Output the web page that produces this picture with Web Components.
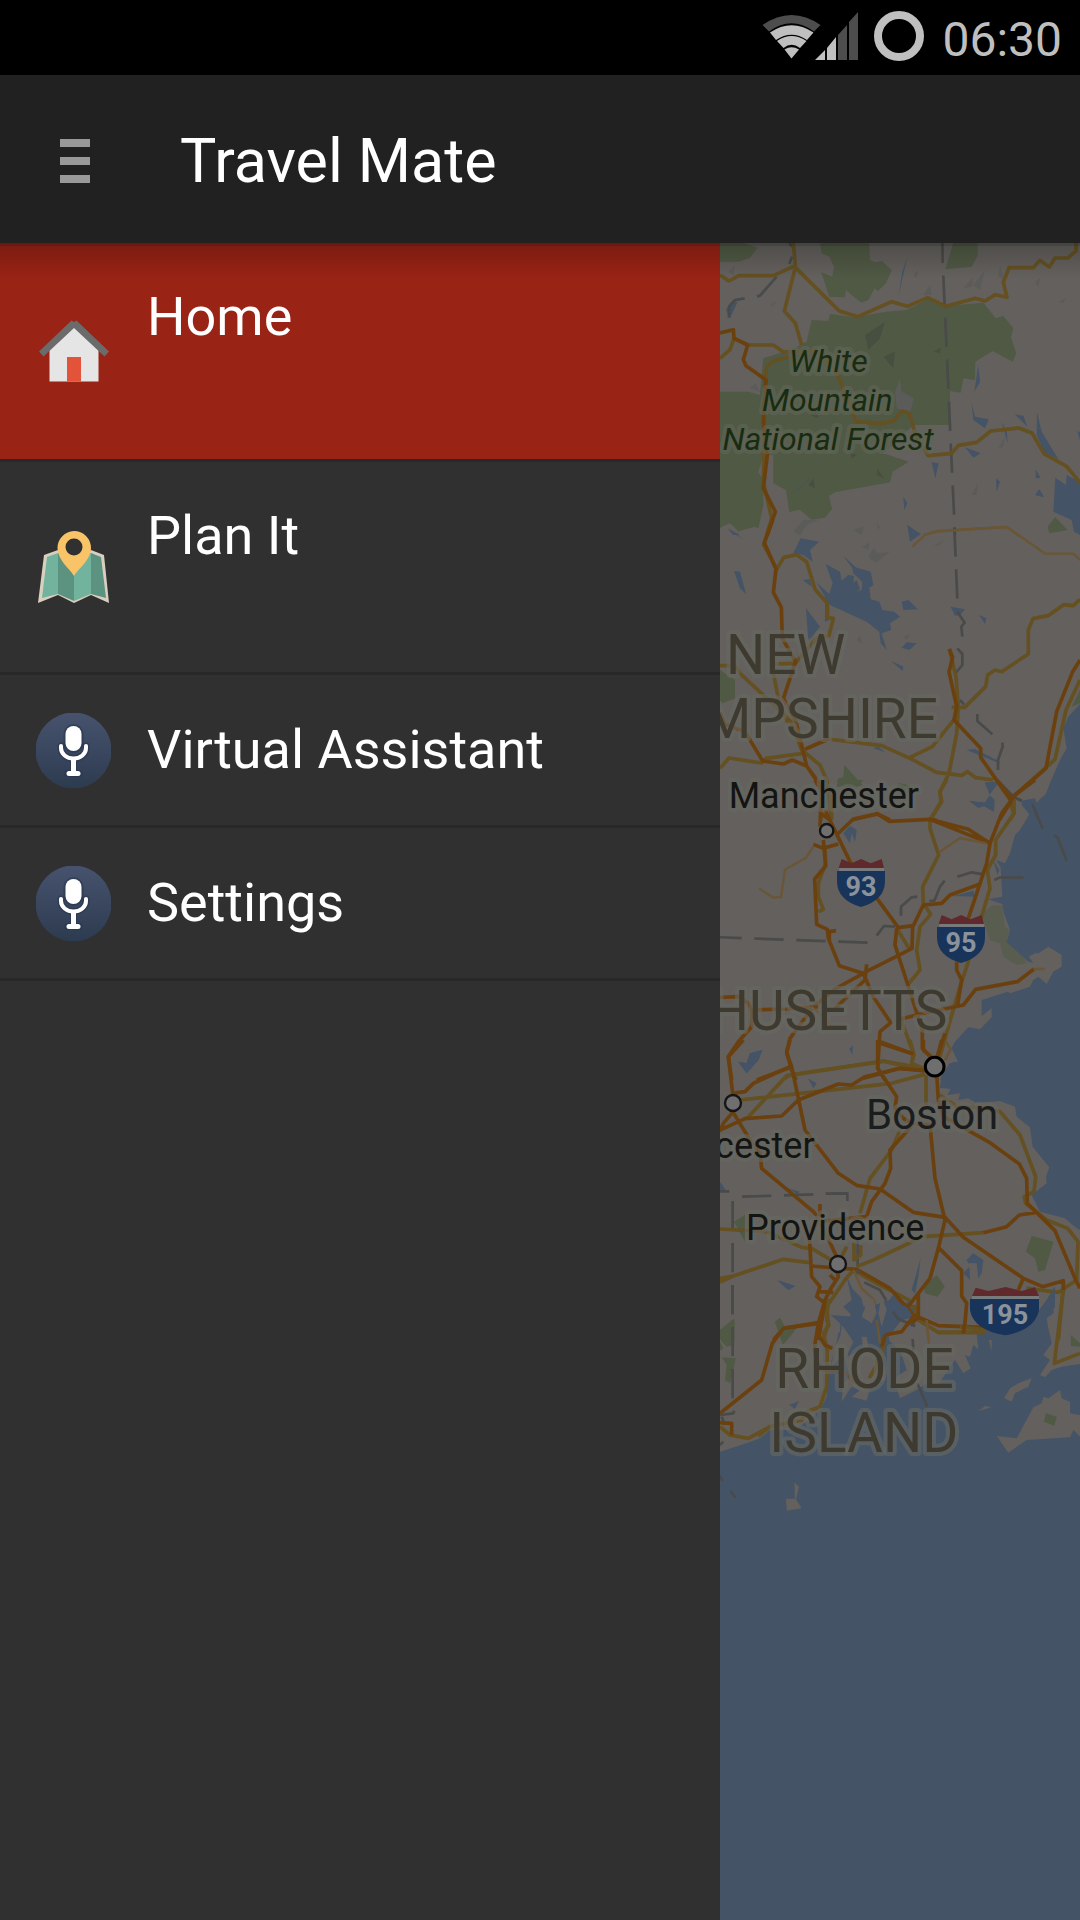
<!DOCTYPE html>
<html lang="en">
<head>
<meta charset="utf-8">
<meta name="viewport" content="width=device-width, initial-scale=1">
<title>Travel Mate</title>
<style>
    body {
        margin: 0;
        background: #303030;
        font-family: Roboto, "Noto Sans", sans-serif;
    }
    svg { display: block; }
</style>
</head>
<body>
<travel-app>
    <status-bar slot="status" time="06:30"></status-bar>
    <app-bar slot="bar">Travel Mate</app-bar>
    <nav-drawer slot="drawer">
        <drawer-item active tall href="#home">
            <svg slot="icon" width="75" height="75" viewBox="0 0 75 75">
                <path d="M13.500 33 38 10 62.500 33V67.500H13.500z" fill="#e5e5e5"/>
                <path d="M31 43h14v24.500H31z" fill="#e2533a"/>
                <path d="M3 37.500 35.500 6.500 38 8 40.500 6.500 73 37.500 68.500 42.500 38 14 7.500 42.500z" fill="#6b6b6b"/>
            </svg>
            Home
        </drawer-item>
        <drawer-item tall href="#plan">
            <svg slot="icon" width="75" height="75" viewBox="0 2 75 75">
                <path d="M8 27 22 22 38 29 55 22 68 27 73 75 55 67 38 75 22 67 2 75z" fill="#d8cfbf"/>
                <path d="M11 29 22 25V66L6 70z" fill="#72b39d"/>
                <path d="M22 25 38 31V73L22 66z" fill="#5c9280"/>
                <path d="M38 31 55 25V66L38 73z" fill="#72b39d"/>
                <path d="M55 25 65 29 70 70 55 66z" fill="#5c9280"/>
                <path d="M38 3A17 17 0 0 0 21.500 20C21.500 32 34 41 38 48C42 41 55 32 55 20A17 17 0 0 0 38 3z" fill="#f9c367"/>
                <circle cx="38" cy="19" r="8.500" fill="#303030"/>
            </svg>
            Plan It
        </drawer-item>
        <drawer-item href="#assistant"><mic-icon slot="icon"></mic-icon>Virtual Assistant</drawer-item>
        <drawer-item href="#settings"><mic-icon slot="icon"></mic-icon>Settings</drawer-item>
    </nav-drawer>
    <map-view></map-view>
</travel-app>

<script>
function define(name, html, init) {
    const template = document.createElement('template')
    template.innerHTML = html
    customElements.define(name, class extends HTMLElement {
        constructor() {
            super()
            this.attachShadow({mode: 'open'})
            this.shadowRoot.append(template.content.cloneNode(true))
        }
        connectedCallback() {
            if (init) init(this, this.shadowRoot)
        }
    })
}

define('travel-app', `
<style>
    :host {
        display: flex;
        flex-direction: column;
        min-height: 100vh;
    }
    main {
        flex: 1;
        display: grid;
        grid-template-columns: 2fr 1fr;
    }
</style>
<slot name="status"></slot>
<slot name="bar"></slot>
<main>
    <slot name="drawer"></slot>
    <slot></slot>
</main>
`)

define('status-bar', `
<style>
    :host {
        display: flex;
        justify-content: flex-end;
        align-items: center;
        height: 75px;
        padding-right: 18px;
        background: #000;
        color: #bfbfbf;
    }
    svg { display: block; }
    time {
        margin-left: 18px;
        font-size: 48px;
        line-height: 56px;
        padding-top: 4px;
    }
</style>
<svg width="164" height="75" viewBox="760 0 164 75" fill="#bfbfbf">
    <path fill="#4d4d4d" d="M762.500 25Q791.500 5 820.500 25L814 31.500Q791.500 15 769 31.500z"/>
    <path d="M770 32.500Q791.500 18 813.500 32.500L807 40Q791.500 29.500 776 40z"/>
    <path d="M777 41Q791.500 31 806.500 41L800 48Q791.500 41.500 783.500 48z"/>
    <path d="M784.500 49.500Q791.500 45 799 49.500L791.500 58.500z"/>
    <path d="M815 60 825 50V60zM827 48 836 37V60H827z"/>
    <path fill="#4d4d4d" d="M838 35 847 25V60H838zM849 22 858 12V60H849z"/>
    <circle cx="899" cy="36" r="21" fill="none" stroke="#bfbfbf" stroke-width="8"/>
</svg>
<time></time>
`, (host, root) => {
    root.querySelector('time').textContent = host.getAttribute('time')
})

define('app-bar', `
<style>
    :host {
        position: relative;
        z-index: 1;
        display: flex;
        align-items: center;
        gap: 90px;
        height: 168px;
        padding: 4px 0 0 60px;
        box-sizing: border-box;
        background: #212121;
        color: #fff;
    }
    /* shadow that falls on the content below */
    :host::after {
        content: "";
        position: absolute;
        top: 100%;
        left: 0;
        right: 0;
        height: 36px;
        border-top: 3px solid rgba(0, 0, 0, .12);
        background: linear-gradient(rgba(0, 0, 0, .2), transparent) border-box;
        box-sizing: border-box;
        pointer-events: none;
    }
    button {
        display: grid;
        gap: 10px;
        padding: 0;
        border: 0;
        background: none;
    }
    i {
        width: 30px;
        height: 8px;
        background: #999;
    }
    h1 {
        margin: 0;
        font-size: 61px;
        font-weight: 400;
        line-height: 72px;
    }
</style>
<button aria-label="Menu"><i></i><i></i><i></i></button>
<h1><slot></slot></h1>
`)

define('nav-drawer', `
<style>
    :host {
        display: block;
        background: #303030;
    }
</style>
<nav><slot></slot></nav>
`)

define('drawer-item', `
<style>
    :host {
        display: block;
        border-bottom: 3px solid #282828;
        --row: 150px;
    }
    :host([tall]) { --row: 210px; }
    :host([active]) {
        --row: 216px;
        background: #992315;
    }
    a {
        display: flex;
        align-items: center;
        gap: 36px;
        min-height: var(--row);
        padding: 0 36px;
        color: #fff;
        font-size: 54px;
        line-height: 64px;
        text-decoration: none;
    }
    :host([tall]) .label {
        align-self: flex-start;
        padding-top: 42px;
    }
</style>
<a><slot name="icon"></slot><span class="label"><slot></slot></span></a>
`, (host, root) => {
    root.querySelector('a').href = host.getAttribute('href')
})

define('mic-icon', `
<style>
    :host { display: block; }
    svg { display: block; }
</style>
<svg width="75" height="75" viewBox="0 0 75 75">
    <defs>
        <linearGradient id="disc" x2="0" y2="1">
            <stop stop-color="#47536e"/>
            <stop offset="1" stop-color="#2d3b50"/>
        </linearGradient>
    </defs>
    <circle cx="37.500" cy="37.500" r="38" fill="url(#disc)"/>
    <g stroke="#26324b" stroke-opacity=".5" fill="none">
        <path d="M37.500 21v9" stroke-width="20" stroke-linecap="round"/>
        <path d="M25 33v2a12.500 10.500 0 0 0 25 0v-2M37.500 46v13M32 60.500h11" stroke-width="7" stroke-linecap="round"/>
    </g>
    <g stroke="#fff" fill="none">
        <path d="M37.500 21v9" stroke-width="16" stroke-linecap="round"/>
        <path d="M25 33v2a12.500 10.500 0 0 0 25 0v-2" stroke-width="4" stroke-linecap="round"/>
        <path d="M37.500 46v13" stroke-width="5"/>
        <path d="M33 60.500h9" stroke-width="5" stroke-linecap="round"/>
    </g>
</svg>
`)

define('map-view', `
<style>
    :host {
        display: block;
        overflow: hidden;
        background: #445366;
    }
    svg {
        display: block;
        width: 100%;
    }
    .land { fill: #63605d; }
    .water { fill: #445366; }
    .park { fill: #505944; }
    .hill { fill: #475040; }
    .rock { fill: #5b5b5a; }
    .y, .o, .p, .border { fill: none; stroke-linejoin: round; }
    .y { stroke: #645021; stroke-width: 11; }
    .o { stroke: #6b400f; stroke-width: 11; }
    .p { stroke: #6a5635; stroke-width: 7; }
    .border { stroke: #494a4a; stroke-width: 8; }
    .dash { stroke-dasharray: 88 38; }
    text {
        font-family: Roboto, "Noto Sans", sans-serif;
        text-anchor: middle;
        paint-order: stroke;
        stroke: #676963;
        stroke-opacity: .6;
        stroke-width: 24px;
        stroke-linejoin: round;
    }
    .forest { font-size: 96px; font-style: italic; fill: #182c12; stroke: #616658; }
    .state { font-size: 165px; fill: #3f3a2f; text-anchor: start; }
    .city { font-size: 108px; fill: #141412; text-anchor: start; }
    .capital { font-size: 126px; fill: #1b1c1d; text-anchor: start; }
    .shield { font-size: 81px; font-weight: 700; fill: #8a939c; stroke: none; }
    .dot { fill: #6f6f6f; stroke: #151515; stroke-width: 7; }
</style>
<svg viewBox="0 0 1080 5031" preserveAspectRatio="xMinYMin slice">
    <path class="land" d="M0 0H1080V4000H0z"/>

    <!-- White Mountains -->
    <g transform="translate(-30 -24)">
        <path class="park" d="M30 24H100L143 38 120 68 87 80 30 80zM330 24H477L480 75 497 82 515 78 545 105 528 145 504 168 494 160 475 195 454 203 408 166 405 187 358 185 334 112 367 125 372 95 358 65 335 55zM730 24H803V62L785 95 706 103z"/>
        <path class="park" d="M360 236 430 247 530 230 590 225 660 190 720 212 820 203 857 250 880 243 910 280 903 307 919 355 908 380 848 348 796 380 795 435 760 430 752 473 720 468V570L610 570 520 655 596 680 548 710 540 742 375 772 357 782 366 822 345 848 305 854 270 824 238 831 228 765 190 745V660L160 660 145 712 160 735V812L145 880 115 867 85 890 60 855 30 880V470H115L150 480 160 370 240 345 290 320 305 255 355 258z"/>
        <path class="hill" d="M465 300 525 260 510 310 475 345zM520 365 555 350 550 400zM670 350 693 338 690 355zM300 540 320 525 325 550zM455 600 480 590 470 620zM500 700 523 730 503 722zM295 750 310 730 315 760zM420 650 440 660 425 670z"/>
        <path class="rock" d="M555 470 570 430 575 470 612 490 600 535 560 520zM610 120 625 105 620 130zM640 180 660 150 665 180zM760 160 790 125 785 155zM790 150 825 105 810 165zM870 95 885 135 865 125zM975 140 990 130 985 155zM1045 203 1070 187 1060 203zM180 213 200 195 190 213zM55 110 75 92 70 120zM785 780 803 745 800 780zM120 460 135 445 150 470zM865 640 885 605 880 635zM250 890 280 855 325 855 290 870 270 900z"/>
        <path class="water" d="M592 65 565 185 577 110zM48 225 65 200 83 200 60 250zM805 390 810 440 793 470zM785 505 795 545 836 553 825 580 790 555zM765 637 812 655 790 668zM915 538 940 542 952 575zM875 560 890 590 893 625zM981 532 995 590 1045 672 1005 655 980 600zM665 682 686 685 676 730zM858 730 870 740 860 770zM977 704 992 728 977 730zM975 780 988 762 1002 787zM580 785 592 805 583 825zM1036 728 1068 750 1070 720 1085 728 1110 740V900L1092 890 1085 855 1030 830zM1102 587 1110 592V615zM592 870 632 900H600zM55 882 90 900H70zM240 783 300 728 300 733z"/>
        <path class="park" d="M1035 846 1073 885 1018 895 1013 875z"/>
        <path class="border" d="M238 24 246 35M246 65 238 87M200 125 150 182 141 184M104 190 75 195 57 215V248"/>
        <path class="border dash" d="M697 0 698 85 700 125 708 300 722 620 735 900" stroke-dashoffset="4"/>
        <path class="y" d="M250 24 256 92 190 122H87L57 138 30 120M256 97 388 228 444 245 545 200 592 214 653 188 708 214 796 190 825 198 856 179 891 187 880 142 897 98H970L989 76 1018 96 1035 69H1073L1098 48V24M256 97 223 228 256 265 275 330M30 370 60 344 72 310 115 330H190L220 351 320 348 380 410 438 560 510 566 550 558 577 528 598 535 620 610 655 662 725 655 745 631 800 622 842 588 926 579 966 594 1003 657 1070 694 1110 743M240 365 192 377 170 395 165 440 160 740 185 850 170 900"/>
        <path class="o" d="M30 294 70 284 72 310 113 330 100 374 108 392 168 435 160 560 172 660 160 760 196 830 172 900"/>
        <path class="p" d="M640 900 680 888 890 876 930 904"/>
    </g>

    <!-- New Hampshire lakes and seacoast -->
    <g transform="translate(-30 831)">
        <path class="park" d="M30 0H145V18L85 33 60 10 30 22zM30 450 75 480V535L37 550 30 540zM403 735 460 798 380 800 385 775 400 772zM565 790 600 795 595 818 560 805zM1110 510V550L1085 560z"/>
        <path class="rock" d="M430 30 460 20 455 45zM455 80 480 68 475 90zM475 110 490 85 505 100 540 95 520 110 500 128 485 120zM670 80 700 60 690 75zM580 350 600 345 590 360zM440 360 450 345 455 370zM500 10 510 20 505 30z"/>
        <path class="water" d="M592 15 632 42 600 65zM272 55 327 65 300 90 308 125 280 105 250 100zM55 25 100 58 62 35zM72 153 90 155 108 222 90 205zM278 180 300 178 305 200zM347 132 390 155 395 182 415 165 432 167 430 190 440 180 450 208 437 215 455 210 457 185 430 160 427 145 400 107 433 138 440 143 482 155 490 195 478 203 482 238 508 245 517 270 552 275 570 290 540 310 543 330 515 340 530 390 512 370 508 335 470 305 360 255 320 188 358 222 368 190zM345 230 357 240V300L345 305zM288 265 330 320 310 345 295 360zM575 245 595 240 623 268 580 270zM575 383 590 367 620 370 598 390zM543 423 580 440 578 453zM722 260 765 268 750 285 735 287zM807 285 829 295 825 312zM1085 0H1110V38zM505 680 525 697 490 685zM770 690 795 687 870 725 868 730zM825 788 865 785 855 802 837 825 853 840 852 875 822 858 805 863 778 843 825 848 840 825zM565 650 595 655 575 660z"/>
        <path class="water" d="M1110 552 1075 590 1060 625 1070 685 1050 720 1020 790 995 855 980 850 975 835 935 842 935 855 960 885 950 900H1110z"/>
        <path class="border dash" d="M733 22 742 237"/>
        <path class="border" d="M742 275 764 308 754 320 757 350M742 385 757 402V435L738 458M750 540 762 553M802 582V603L847 643M877 668 878 680 864 720V750M866 785 912 832 935 842M967 852 990 915"/>
        <path class="y" d="M185 0 161 75 200 147 222 112 260 104 290 125 315 208 352 250 353 293 370 295 357 347 320 355 255 430 195 432M30 437H75L90 460 240 600 275 690 330 735 350 780 365 900M190 460 210 560 235 610M30 745 57 714 155 729 168 715 280 700M290 685 355 657 515 677 600 715 680 757 755 766 773 755 797 773 850 780M600 712 667 680 735 595M718 387 738 470 745 560 740 640 717 760 690 815 693 845 660 900M725 562H764L827 500 833 465 855 450 875 455 955 402V330L969 296 1014 287 1061 254 1090 257 1110 238M1110 480 1068 570 1035 718 910 830 900 850 912 880 900 900"/>
        <path class="o" d="M188 0 163 68 198 147 190 217 214 262 217 355 257 425 220 535 258 605 290 738 332 800V900M30 578 45 613 105 635 158 723 220 732 247 720 290 738 335 800M285 688 355 657M332 880 360 900M425 900 502 882 540 900M660 900H680M718 387 728 412 717 455 740 560 732 600 812 685V712L900 838M1110 420 1088 455 1040 575 1008 745 915 825 868 900"/>
        <path class="p" d="M607 80 645 45 680 35 890 21 1006 101H1090L1110 120"/>
    </g>

    <!-- Merrimack valley and Boston harbour -->
    <g transform="translate(-30 1611)">
        <path class="park" d="M378 0H460L440 22 400 15z"/>
        <path class="park" d="M815 400 850 375 877 378 885 440 898 450 890 480 920 500 950 550 920 555 880 530 870 490 840 480z" opacity=".5"/>
        <path class="water" d="M1027 0 1010 40 975 72 950 60 960 100 930 150 915 165 900 220 885 250 858 240 872 262 877 350 835 358 877 372 882 400 900 450 890 487 905 500 955 545 970 548 956 530 975 520H985L1015 500 1055 525V560L1030 575 1010 612 985 590 970 600 960 620 900 640 893 635 815 660V708L845 685V712L810 748 775 742 735 785 725 805 745 845 720 850 700 880 690 900H1110V0z"/>
        <path class="water" d="M825 8 865 5 855 22 837 45 853 60 852 95 822 78 805 83 778 63 825 68 840 45zM400 160 420 137 440 150 435 185 425 160 420 190zM730 348 790 332 795 350zM85 845 110 850 120 820 157 810 145 840 110 880zM418 808 428 795V825zM850 240 868 270 862 285z"/>
        <path class="border" d="M866 5 912 52 935 62M967 72 998 146M1032 167 1042 170 1070 242M742 290 785 277 820 283M853 300 870 292H940M704 302 690 320 673 362 658 363M622 350 605 352 573 380V407M500 467 522 438 555 440"/>
        <path class="border dash" d="M7 471 473 488"/>
        <path class="y" d="M350 0 362 60 365 115M710 0 690 35 695 65 660 120V145L686 225 638 320 640 370 662 403 630 440 620 510 630 570 595 612M912 60 912 100 857 180V225L832 270 840 325 770 560 750 620 715 740 690 830M345 195 347 250 325 310V350L340 388 325 395M560 445 600 510M570 710 610 820 605 850 640 865M225 895 240 885 520 843 640 865"/>
        <path class="o" d="M315 0 335 35 330 140M345 90 420 245 565 443 610 437 640 375 695 370 720 345 808 313M380 165 430 117 502 101 537 124 660 118 840 190M660 118 775 148 840 190M860 0 905 55M975 0 915 45 875 100 840 190 830 250 775 415M740 545V570L755 600 742 680M310 193 340 205 385 192M340 180 347 258 314 297 320 433 352 448 355 475 388 557 458 580 558 530 606 505 608 437M560 445 555 495 637 750V805L680 850M358 480V455L378 452M470 553 465 600 375 685M460 580 375 627 310 680 240 775 230 815 245 870 258 900M460 580 490 650 542 728 510 755 503 865 525 900M30 652 85 650 115 670 125 690 230 687 325 680M125 690V740L85 785 55 830 65 900M570 718 640 700 760 675 797 628 922 605 972 567M510 790 610 822M245 860 140 900M460 895 570 865 640 872M705 760 680 835"/>
        <path class="p" d="M147 325 190 353 213 351 225 269 287 234 310 200M690 215 750 174 830 190M970 567H1004M708 785 722 808 705 840M305 680 370 740"/>
    </g>

    <!-- Providence and Cape Cod bay -->
    <g transform="translate(-30 2391)">
        <path class="park" d="M965 588 1030 605 1005 690 985 695 975 655 948 635zM680 705 704 740 682 770 645 760 642 740zM72 545 105 525V605zM195 845 210 835 225 860 262 860 230 900 215 895zM30 870 73 845V900H30z"/>
        <path class="water" d="M745 0 725 25 745 65 720 70 695 105 690 143 722 147 712 165 750 160 745 180 775 175 800 190 870 183 915 200 920 230 960 262 968 320 1018 382 1008 410 1010 430 965 465 990 515 1065 535 1100 565 1110 570V0z"/>
        <path class="water" d="M85 65 110 70 120 40 157 30 145 60 110 100zM294 115 320 130 310 145zM235 445 270 455 260 462zM30 425 47 450H30zM203 720 255 738 235 750zM770 660 790 640 820 660 815 700 805 715 800 670 775 670zM760 700 778 680 780 720zM632 655 625 710 615 760 605 750zM410 710 430 750 455 775 460 800 520 815 530 790 550 765 575 790 600 785 615 810 610 840 585 880 520 900H390V850L362 825 430 830 400 800 425 780zM800 870 960 850 1010 780 1035 740V800L1010 830V900H820z"/>
        <path class="border" d="M30 454H58M347 461 412 460V483M463 727 510 750 528 780M550 815 565 837 615 858M443 590V680"/>
        <path class="border dash" d="M96 470 320 463M68 483V900"/>
        <path class="y" d="M90 180 545 130 645 103M110 236 230 107 520 64 645 92M600 0 612 45 605 70 640 90M648 105V195M570 270 545 330 480 415 450 520M30 567 170 575 275 622 305 625 380 670M30 715 70 708 220 658 300 668M30 726 70 708M440 680 490 660 640 590 820 578M690 165 740 200 830 205 870 215 930 285 977 410 972 455 943 470 947 490 1010 540 1073 565 1104 605 1100 720 1045 757 950 745M432 605V660L452 645V615M600 782 490 725 430 690 405 720 350 800 355 850 340 900M590 800 615 800 625 840 685 877H825M1060 740 1045 900M410 620 385 670"/>
        <path class="o" d="M100 0 55 50 68 160 105 155 130 130 240 80M240 0 230 40 245 80 285 270 385 400 440 436 510 447 610 517 705 532 760 592 940 715 998 740 1060 722V757M70 215 40 250 30 275M30 270 105 236 215 228 265 180 385 132 425 135 465 110 570 85 645 92M503 0V85L560 170 555 205 580 235 605 250M605 258 540 330 542 385 525 430 485 485 470 530 330 545 380 650M510 5 610 42M640 0V30L680 65M680 100 685 180 700 230 840 308 928 372 950 415 952 490 1035 572 1098 722 1110 745M605 250 660 255 675 415 705 540 685 625 660 715 625 760 590 805M820 578 890 560 928 525 975 518M688 625 755 692V768L770 790 762 880M68 215 120 300 150 340 155 385 310 515 335 545M330 492V530L298 590 305 710 330 740 320 770 345 790 325 900M300 678 440 688 540 745 610 825 685 857 820 862M625 760V830L575 883 525 887 520 900M380 680 385 710 360 750 340 790M360 705 375 720M330 755 370 757M335 785 360 783M325 848 220 865 190 900M940 715 925 750M695 0 680 60"/>
        <path class="p" d="M708 5 722 28 705 60M430 690 455 745 493 780 505 900M650 840 655 900"/>
    </g>

    <!-- Rhode Island sound -->
    <g transform="translate(-30 3081)">
        <path class="water" d="M30 545 110 520 150 505 180 480 250 480 300 450 330 420 350 380 355 300 375 240 385 190 410 160 440 100 475 115 530 90 590 110 610 140 600 165 530 190 540 215 570 240 590 300 560 320 555 340 570 385 620 360 650 340 680 350 735 270 760 310 782 295 765 255 780 260 790 225 805 238 800 190 835 205 845 245 845 195 880 205 960 160 1010 90 1035 50 1030 130 1010 145 1015 175 1025 220 1000 255 1020 270 990 315 1005 322 1025 300 1055 290 1110 282V1980H30z"/>
        <path class="land" d="M360 150 395 170 390 200 370 240 365 290 400 250 420 320 400 340 395 395 425 350 450 360 425 380 470 392 480 355 525 330V290L490 250 475 230 470 200 455 200 460 240 410 260 430 215 400 170zM575 150 600 145 605 180 610 230 590 250 555 225 535 200zM470 100 490 85 500 130 485 160 455 140zM515 75 530 120 515 170 505 130zM1050 360 1055 385 1080 395V430L1110 435V500L1090 480 1080 502 950 510 895 548 875 520 860 498 920 505 970 412 995 400 1000 380 1015 385zM965 325 955 350 915 370 905 395 882 385 900 355 925 340zM845 412 805 423 825 408zM253 637 267 650 258 688 275 715 230 722 228 686H255z"/>
        <path class="park" d="M195 155 210 143 225 170 262 170 240 200 218 225zM30 180 73 145V225L50 230 35 215zM30 215 40 235 30 242zM35 262 77 265 70 300 60 340 45 330 50 285zM1008 430 1040 440 1033 467 1002 455zM1082 195 1110 220V230L1083 228z"/>
        <path class="water" d="M203 32 255 48 235 60zM238 405 267 393 255 417z"/>
        <path class="border" d="M548 125 565 147 615 168M608 207 610 240M622 340 652 410M30 435 70 430 73 422M30 525 40 515M30 618 38 633M62 663 76 683M35 440 45 465M443 0V10"/>
        <path class="border dash" d="M68 45V400"/>
        <path class="y" d="M355 90 350 150 357 165 340 190 352 240 350 350 330 410 290 425 275 450 180 470 115 505 60 495 30 470M180 470 145 498M525 195 515 260 480 320 510 280 495 270M685 187H825M1060 60 1033 280 1110 250M750 170 830 180"/>
        <path class="o" d="M345 90 325 160 220 175 187 220 155 330 30 430M325 160 312 240 330 300M30 458 65 460V495M325 195 345 225 367 235M525 195 575 185 610 140M760 190 762 165M525 195 515 230"/>
        <path class="o" opacity=".5" d="M335 300 410 310 430 335 465 340"/>
        <path class="p" d="M500 150 510 220M650 150 657 220"/>
    </g>

    <!-- town markers -->
    <g transform="translate(-30 1611)">
        <circle class="dot" cx="350" cy="152" r="20"/>
        <circle class="dot" cx="674" cy="860" r="28" style="stroke: #000; stroke-width: 9"/>
        <circle class="dot" cx="69" cy="969" r="24"/>
        <circle class="dot" cx="384" cy="1452" r="24"/>
    </g>

    <!-- interstate shields -->
    <g transform="translate(-30 1611)">
        <g id="i93">
            <path fill="#777a7d" d="M388 262H522V274H388z"/>
            <path fill="#602a2d" d="M386 264 395 237 425 250 453 237 482 250 515 237 522 264z"/>
            <path fill="#18345a" d="M381 273H525V305Q524 360 453 381Q382 360 381 305z"/>
        </g>
        <use href="#i93" x="300" y="168"/>
        <path fill="#777a7d" d="M786 1546H987V1558H786z"/>
        <path fill="#602a2d" d="M786 1548 797 1523 835 1533 887 1521 935 1533 975 1522 987 1548z"/>
        <path fill="#18345a" d="M780 1557H987V1590Q975 1650 886 1666Q790 1650 780 1590z"/>
        <text class="shield" x="453" y="347">93</text>
        <text class="shield" x="753" y="515">95</text>
        <text class="shield" x="885" y="1631">195</text>
    </g>

    <text class="forest" x="325" y="388">White</text>
    <text class="forest" x="322" y="504">Mountain</text>
    <text class="forest" x="324" y="621">National Forest</text>
    <text class="state" x="18" y="1293">NEW</text>
    <text class="state" style="text-anchor: end" x="654" y="1485">MPSHIRE</text>
    <text class="city" x="26" y="1695">Manchester</text>
    <text class="state" style="text-anchor: end" x="682" y="2361">HUSETTS</text>
    <text class="capital" x="438" y="2658">Boston</text>
    <text class="city" style="text-anchor: end" x="284" y="2744">cester</text>
    <text class="city" x="78" y="2990">Providence</text>
    <text class="state" x="166" y="3434">RHODE</text>
    <text class="state" x="148" y="3627">ISLAND</text>
</svg>
`)
</script>
</body>
</html>
